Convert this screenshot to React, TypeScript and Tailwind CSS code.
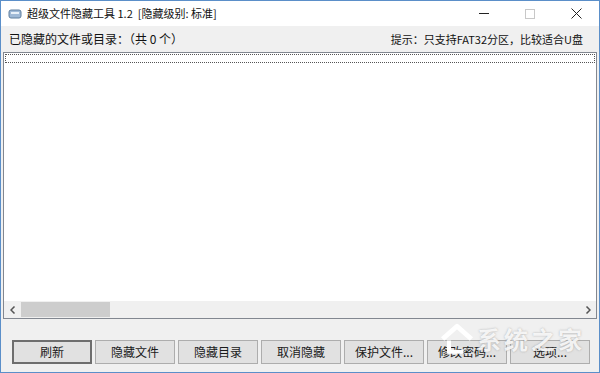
const cjk = { fontFamily: '"Noto Sans CJK SC", "Liberation Sans", sans-serif' };

function WinButton({ label, primary }: { label: string; primary?: boolean }) {
  return (
    <button
      className={
        "w-[80px] h-[24px] bg-[#e1e1e1] text-[12px] text-[#1a1a1a] flex items-center justify-center " +
        (primary ? "border-2 border-[#6e6e6e]" : "border border-[#adadad]")
      }
    >
      {label}
    </button>
  );
}

export default function App() {
  const buttons = ["刷新", "隐藏文件", "隐藏目录", "取消隐藏", "保护文件...", "修改密码...", "选项..."];
  return (
    <div
      className="w-[600px] h-[373px] flex flex-col bg-[#f0f0f0] border border-[#5b8fc9] relative overflow-hidden"
      style={cjk}
    >
      {/* title bar */}
      <div className="h-[25px] bg-white flex items-center shrink-0">
        <svg width="14" height="12" viewBox="0 0 14 12" className="ml-[7px] mr-[5px]">
          <rect x="1" y="2" width="12" height="8" rx="2" fill="#9fb9d6" stroke="#5f7f9f" />
          <rect x="3" y="4" width="8" height="2" fill="#e8f0f8" />
        </svg>
        <span className="text-[11px] text-[#111] whitespace-pre">超级文件隐藏工具 1.2  [隐藏级别: 标准]</span>
        <div className="ml-auto flex items-center h-full">
          <div className="w-[46px] h-full flex items-center justify-center">
            <div className="w-[10px] h-px bg-[#222]" />
          </div>
          <div className="w-[46px] h-full flex items-center justify-center">
            <div className="w-[10px] h-[10px] border border-[#c8c8c8]" />
          </div>
          <div className="w-[46px] h-full flex items-center justify-center">
            <svg width="11" height="11" viewBox="0 0 11 11">
              <path d="M0.5 0.5 L10.5 10.5 M10.5 0.5 L0.5 10.5" stroke="#222" strokeWidth="1" />
            </svg>
          </div>
        </div>
      </div>

      {/* label row */}
      <div className="h-[26px] flex items-center justify-between px-[8px] text-[#111] shrink-0">
        <span className="text-[12px]">已隐藏的文件或目录：（共 0 个）</span>
        <span className="text-[11px] mr-[8px]">提示：只支持FAT32分区，比较适合U盘</span>
      </div>

      {/* list box */}
      <div className="mx-[2px] h-[267px] border border-[#828790] bg-white flex flex-col shrink-0">
        <div className="h-[9px] mt-[1px] mx-px border border-dotted border-[#555]" />
        <div className="flex-1" />
        <div className="h-[17px] bg-[#f0f0f0] flex items-center">
          <div className="w-[17px] h-full flex items-center justify-center">
            <svg width="6" height="8" viewBox="0 0 6 8">
              <path d="M4.5 0.5 L1 4 L4.5 7.5" stroke="#555" strokeWidth="1.5" fill="none" />
            </svg>
          </div>
          <div className="w-[89px] h-[15px] bg-[#cdcdcd]" />
          <div className="flex-1" />
          <div className="w-[17px] h-full flex items-center justify-center">
            <svg width="6" height="8" viewBox="0 0 6 8">
              <path d="M1.5 0.5 L5 4 L1.5 7.5" stroke="#555" strokeWidth="1.5" fill="none" />
            </svg>
          </div>
        </div>
      </div>

      {/* buttons */}
      <div className="flex-1 flex items-end pb-[8px] pl-[11px] gap-[3px]">
        {buttons.map((b, i) => (
          <WinButton key={b} label={b} primary={i === 0} />
        ))}
      </div>

      {/* watermark */}
      <div className="absolute left-[438px] top-[322px] flex items-center gap-[2px] pointer-events-none">
        <svg width="36" height="32" viewBox="0 0 44 40">
          <path d="M4 20 L22 4 L40 20" stroke="white" strokeWidth="6" fill="none" strokeLinejoin="round" />
          <path d="M12 22 L12 36 L30 36" stroke="white" strokeWidth="5" fill="none" />
        </svg>
        <span
          className="text-[24px] leading-[28px] font-bold text-white/85 tracking-[3px]"
          style={{ textShadow: "0 0 2px rgba(120,120,120,0.6)" }}
        >
          系统之家
        </span>
      </div>
    </div>
  );
}
